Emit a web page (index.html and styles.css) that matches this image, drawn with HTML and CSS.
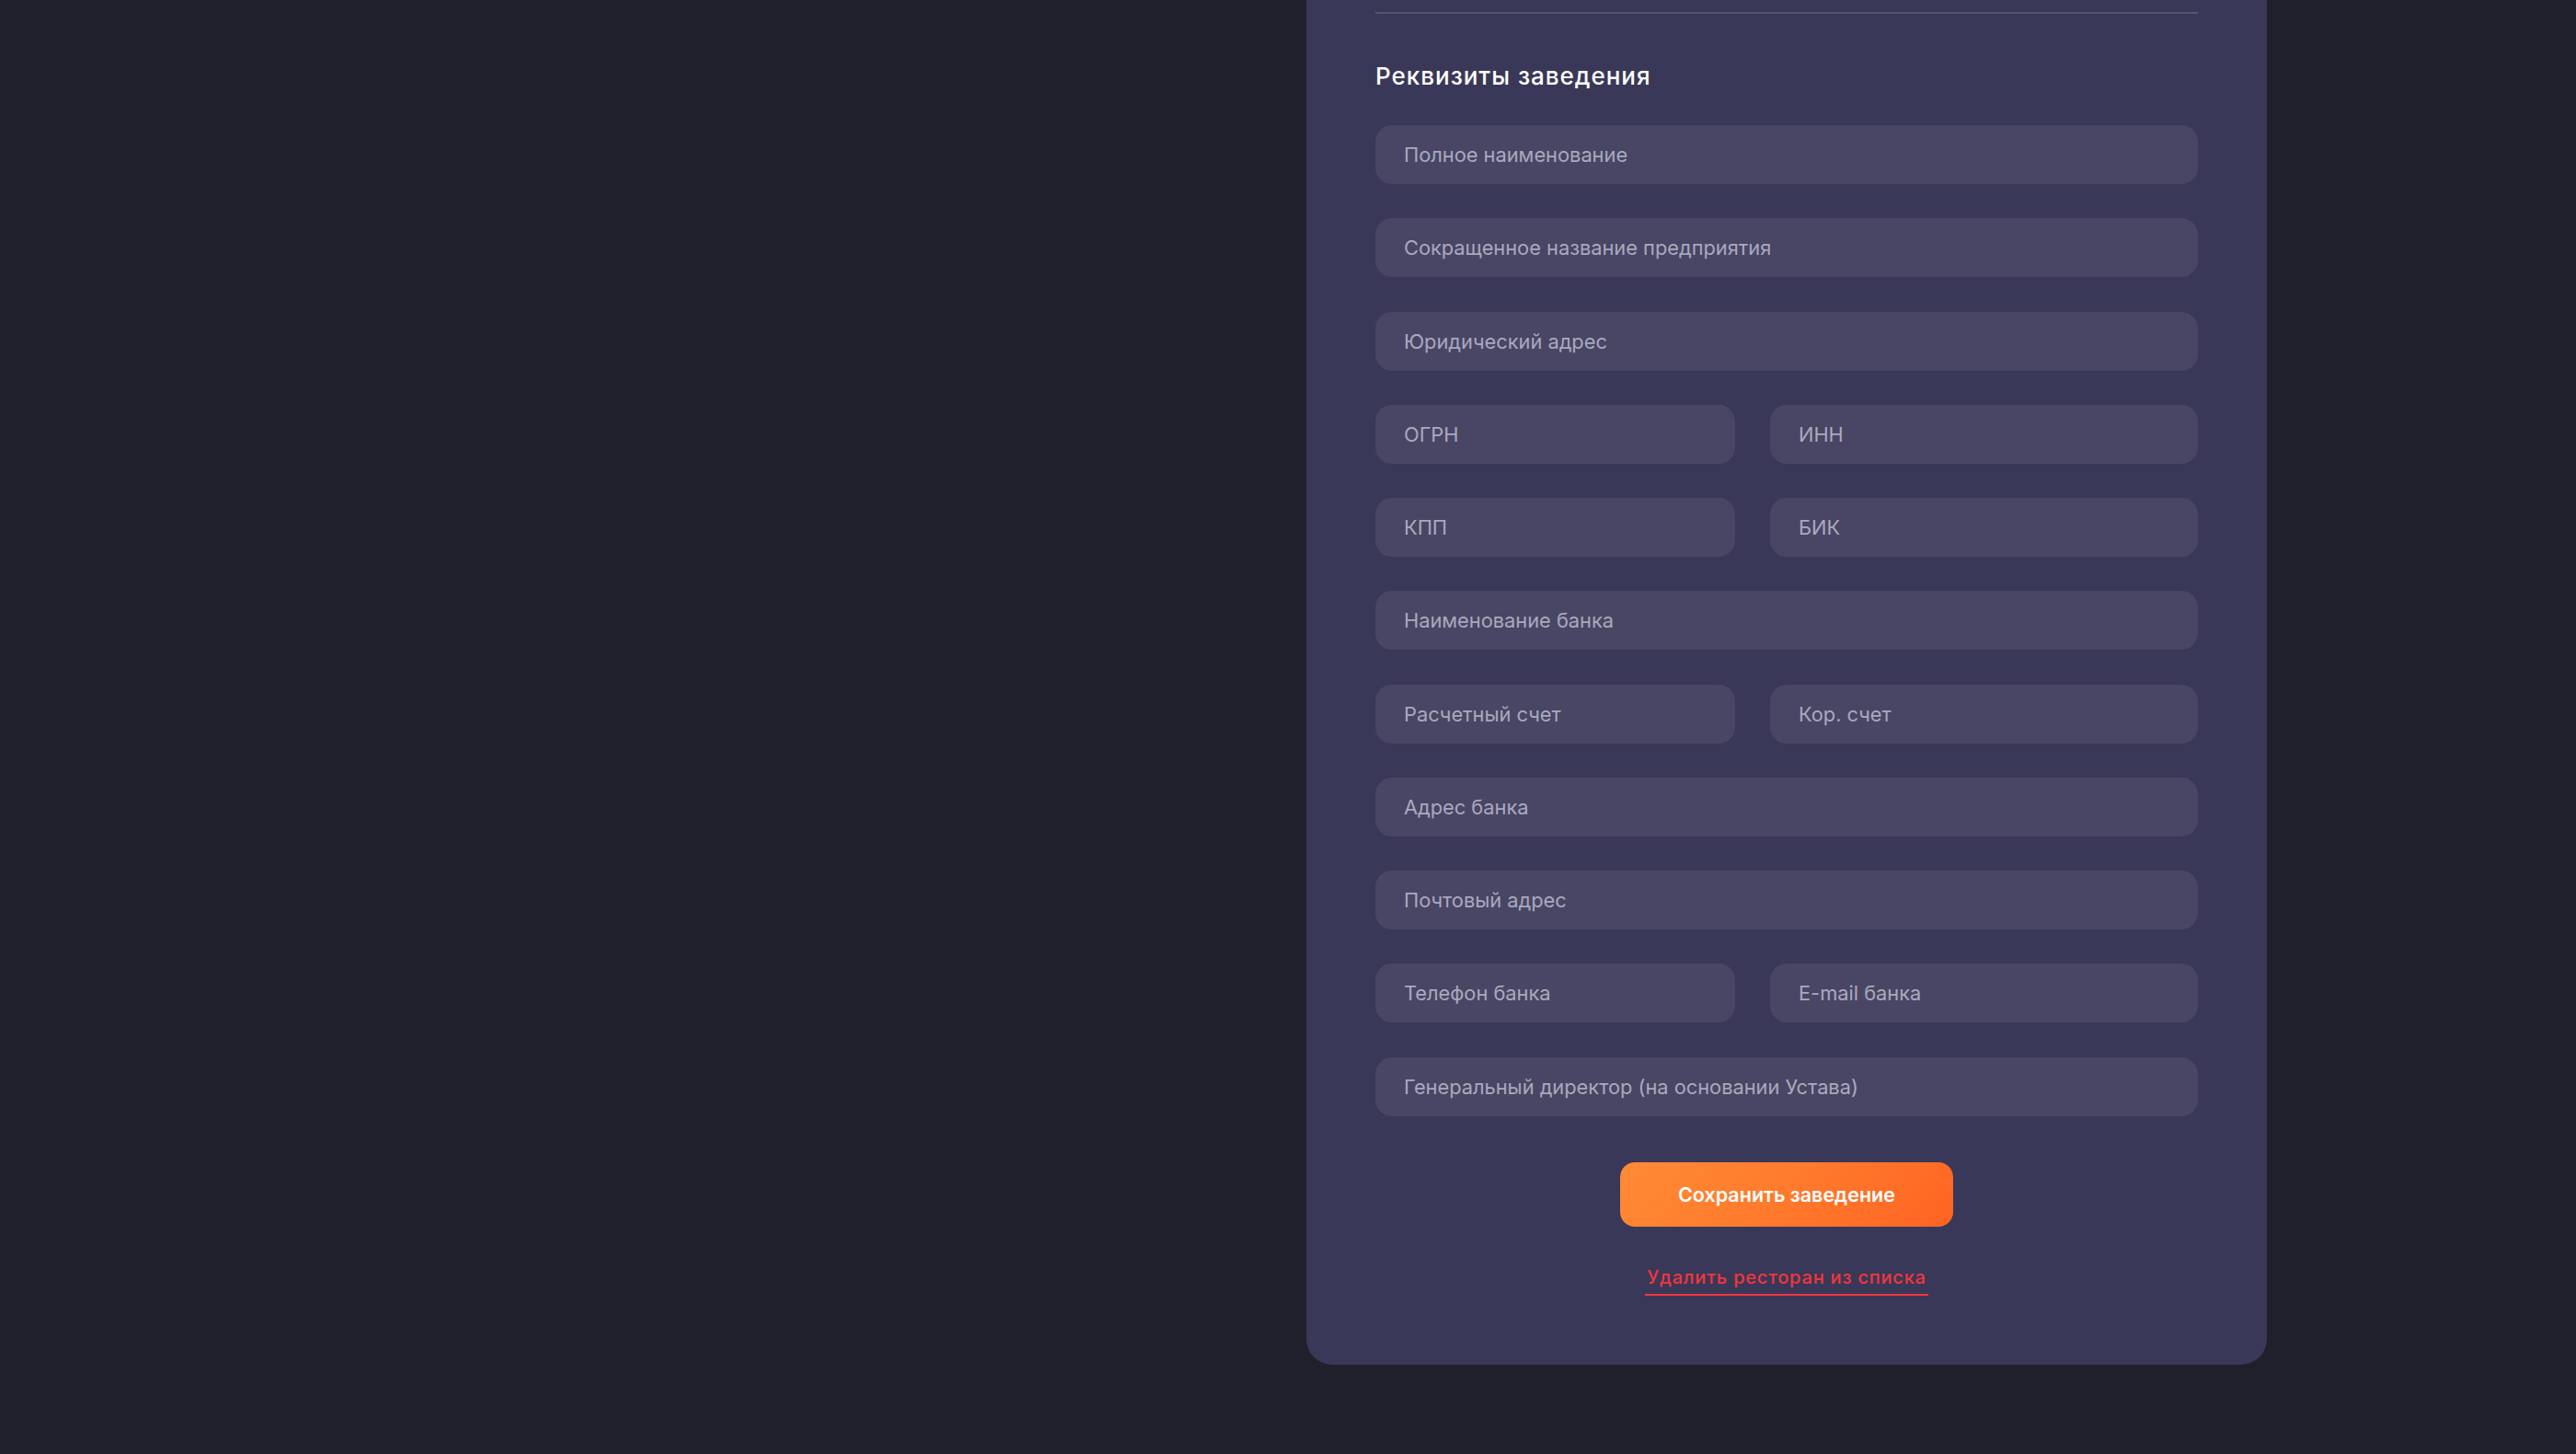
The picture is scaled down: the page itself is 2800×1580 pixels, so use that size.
FILE: index.html
```html
<!DOCTYPE html>
<html lang="ru">
<head>
<meta charset="utf-8">
<title>Реквизиты заведения</title>
<link rel="stylesheet" href="styles.css">
</head>
<body>
<div class="page">
  <section class="panel">
    <hr class="divider">
    <h2 class="title">Реквизиты заведения</h2>
    <div class="form">
      <div class="field wide">Полное наименование</div>
      <div class="field wide">Сокращенное название предприятия</div>
      <div class="field wide">Юридический адрес</div>
      <div class="field">ОГРН</div>
      <div class="field">ИНН</div>
      <div class="field">КПП</div>
      <div class="field">БИК</div>
      <div class="field wide">Наименование банка</div>
      <div class="field">Расчетный счет</div>
      <div class="field">Кор. счет</div>
      <div class="field wide">Адрес банка</div>
      <div class="field wide">Почтовый адрес</div>
      <div class="field">Телефон банка</div>
      <div class="field">E-mail банка</div>
      <div class="field wide">Генеральный директор (на основании Устава)</div>
    </div>
    <div class="actions">
      <button class="save" type="button">Сохранить заведение</button>
      <a class="delete" href="#">Удалить ресторан из списка</a>
    </div>
  </section>
</div>
</body>
</html>
```
FILE: styles.css
```css
html, body {
  margin: 0;
  padding: 0;
  background: #20202c;
  font-family: "Inter", "Noto Sans", sans-serif;
}

.page {
  min-height: 1580px;
  padding-left: 1420px;
  box-sizing: border-box;
}

.panel {
  width: 1044px;
  box-sizing: border-box;
  background: #3a3858;
  border-radius: 0 0 28px 28px;
  padding: 13px 75px 75px;
}

.divider {
  margin: 0;
  border: 0;
  height: 2px;
  background: #55546c;
}

.title {
  margin: 52px 0 0;
  font-size: 26px;
  line-height: 32px;
  font-weight: 500;
  letter-spacing: 1px;
  color: #ffffff;
}

.form {
  margin-top: 37px;
  display: grid;
  grid-template-columns: 391px 1fr;
  column-gap: 38px;
  row-gap: 37.25px;
}

.field {
  height: 64px;
  box-sizing: border-box;
  display: flex;
  align-items: center;
  padding-left: 31px;
  background: #484664;
  border-radius: 18px;
  color: #aaa8bf;
  font-size: 21.8px;
  line-height: 26px;
}

.field.wide {
  grid-column: 1 / -1;
}

.actions {
  display: flex;
  flex-direction: column;
  align-items: center;
  margin-top: 50px;
}

.save {
  width: 362px;
  height: 70px;
  border: 0;
  border-radius: 16px;
  background: linear-gradient(135deg, #ff8b36 0%, #ff7a2c 50%, #ff6322 100%);
  color: #ffffff;
  font-family: "Inter", "Noto Sans", sans-serif;
  font-size: 21.5px;
  font-weight: 600;
  cursor: pointer;
}

.delete {
  margin-top: 43px;
  color: #f0363e;
  font-size: 20px;
  line-height: 24px;
  font-weight: 500;
  letter-spacing: 0.8px;
  text-decoration: none;
  padding: 0 2px 6px;
  border-bottom: 2px solid #f0363e;
}
```
